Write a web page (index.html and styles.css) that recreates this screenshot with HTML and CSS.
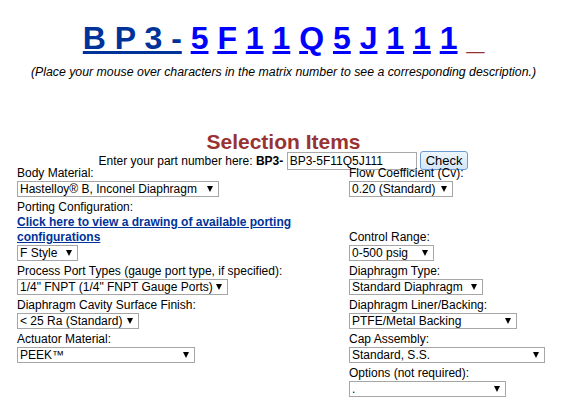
FILE: index.html
```html
<!DOCTYPE html>
<html>
    <head>
        <title>Back Pressure Regulator - Part Number Builder</title>
        <link rel="stylesheet" href="styles.css">
    </head>
    <body>
        <h1 id="matrix">
            <a class="base" href="#">B P 3 -</a>
            <a href="#">5</a>
            <a href="#">F</a>
            <a href="#">1</a>
            <a href="#">1</a>
            <a href="#">Q</a>
            <a href="#">5</a>
            <a href="#">J</a>
            <a href="#">1</a>
            <a href="#">1</a>
            <a href="#">1</a>
            <span class="tail">_</span>
        </h1>
        <p class="hint">(Place your mouse over characters in the matrix number to see a corresponding description.)</p>

        <h2 class="title">Selection Items</h2>
        <div class="enter">
            Enter your part number here:&nbsp;<b>BP3-</b>&nbsp;<input id="partno" type="text" value="BP3-5F11Q5J111"> <button id="checkbtn">Check</button>
        </div>

        <div class="items">
            <div class="cell">
                <div class="lbl">Body Material:</div>
                <span class="sel"><select class="w202"><option>Hastelloy® B, Inconel Diaphragm</option></select></span>
            </div>
            <div class="cell">
                <div class="lbl">Flow Coefficient (Cv):</div>
                <span class="sel"><select class="w104"><option>0.20 (Standard)</option></select></span>
            </div>

            <div class="cell">
                <div class="lbl">Porting Configuration:</div>
                <a class="drawing" href="#">Click here to view a drawing of available porting configurations</a>
                <span class="sel"><select class="w61"><option>F Style</option></select></span>
            </div>
            <div class="cell">
                <div class="lbl">Control Range:</div>
                <span class="sel"><select class="w85"><option>0-500 psig</option></select></span>
            </div>

            <div class="cell">
                <div class="lbl">Process Port Types (gauge port type, if specified):</div>
                <span class="sel"><select class="w211"><option>1/4" FNPT (1/4" FNPT Gauge Ports)</option></select></span>
            </div>
            <div class="cell">
                <div class="lbl">Diaphragm Type:</div>
                <span class="sel"><select class="w134"><option>Standard Diaphragm</option></select></span>
            </div>

            <div class="cell">
                <div class="lbl">Diaphragm Cavity Surface Finish:</div>
                <span class="sel"><select class="w122"><option>&lt; 25 Ra (Standard)</option></select></span>
            </div>
            <div class="cell">
                <div class="lbl">Diaphragm Liner/Backing:</div>
                <span class="sel"><select class="w168"><option>PTFE/Metal Backing</option></select></span>
            </div>

            <div class="cell">
                <div class="lbl">Actuator Material:</div>
                <span class="sel"><select class="w178"><option>PEEK™</option></select></span>
            </div>
            <div class="cell">
                <div class="lbl">Cap Assembly:</div>
                <span class="sel"><select class="w196"><option>Standard, S.S.</option></select></span>
            </div>

            <div class="cell"></div>
            <div class="cell">
                <div class="lbl">Options (not required):</div>
                <span class="sel"><select class="w157"><option>.</option></select></span>
            </div>
        </div>
    </body>
</html>
```

FILE: styles.css
```css
body{
    margin:0;
    font-family:"Liberation Sans", Arial, sans-serif;
    font-size:12px;
    color:#000;
    background:#fff;
}
#matrix{
    margin:20px 0 0;
    text-align:center;
    font-size:32px;
    line-height:37px;
    font-weight:bold;
}
#matrix a{
    color:#0000ff;
    text-decoration-thickness:3px;
}
#matrix a.base{
    color:#003399;
}
#matrix .tail{
    color:#993333;
}
.hint{
    margin:8px 0 0;
    text-align:center;
    font-style:italic;
    font-size:12.3px;
    line-height:14px;
}
.title{
    margin:54px 0 0;
    text-align:center;
    font-size:21px;
    line-height:18px;
    color:#993333;
}
.enter{
    display:flex;
    align-items:center;
    justify-content:center;
    height:19px;
}
#partno{
    width:130px;
    height:18px;
    box-sizing:border-box;
    margin:0 3px 0 0;
    padding:0 2px;
    border:1px solid #a9a9a9;
    font-family:"Liberation Sans", Arial, sans-serif;
    font-size:12px;
}
#checkbtn{
    height:19px;
    padding:0 5px;
    border:1px solid #6d9bd1;
    border-radius:3px;
    background:linear-gradient(#eef6fd, #d3e5f7);
    font-family:"Liberation Sans", Arial, sans-serif;
    font-size:13px;
    color:#000;
}
.items{
    width:533px;
    margin:-5px auto 0;
    display:grid;
    grid-template-columns:332px 1fr;
    align-items:end;
}
.cell{
    padding-bottom:2px;
}
.lbl{
    line-height:16px;
}
.drawing{
    display:block;
    line-height:15px;
    font-weight:bold;
    color:#003399;
}
.sel{
    display:inline-block;
    position:relative;
    vertical-align:top;
}
.sel select{
    -webkit-appearance:none;
    appearance:none;
    display:block;
    height:16px;
    box-sizing:border-box;
    margin:0;
    padding:0 0 0 2px;
    border:1px solid #a6a6a6;
    border-radius:0;
    background:#fff;
    font-family:"Liberation Sans", Arial, sans-serif;
    font-size:12px;
    line-height:14px;
    color:#000;
}
.sel::after{
    content:"";
    position:absolute;
    right:6px;
    top:5px;
    border-left:3px solid transparent;
    border-right:3px solid transparent;
    border-top:6px solid #000;
    pointer-events:none;
}
.w61{width:61px;}
.w85{width:85px;}
.w104{width:104px;}
.w122{width:122px;}
.w134{width:134px;}
.w157{width:157px;}
.w168{width:168px;}
.w178{width:178px;}
.w196{width:196px;}
.w202{width:202px;}
.w211{width:211px;}
```
